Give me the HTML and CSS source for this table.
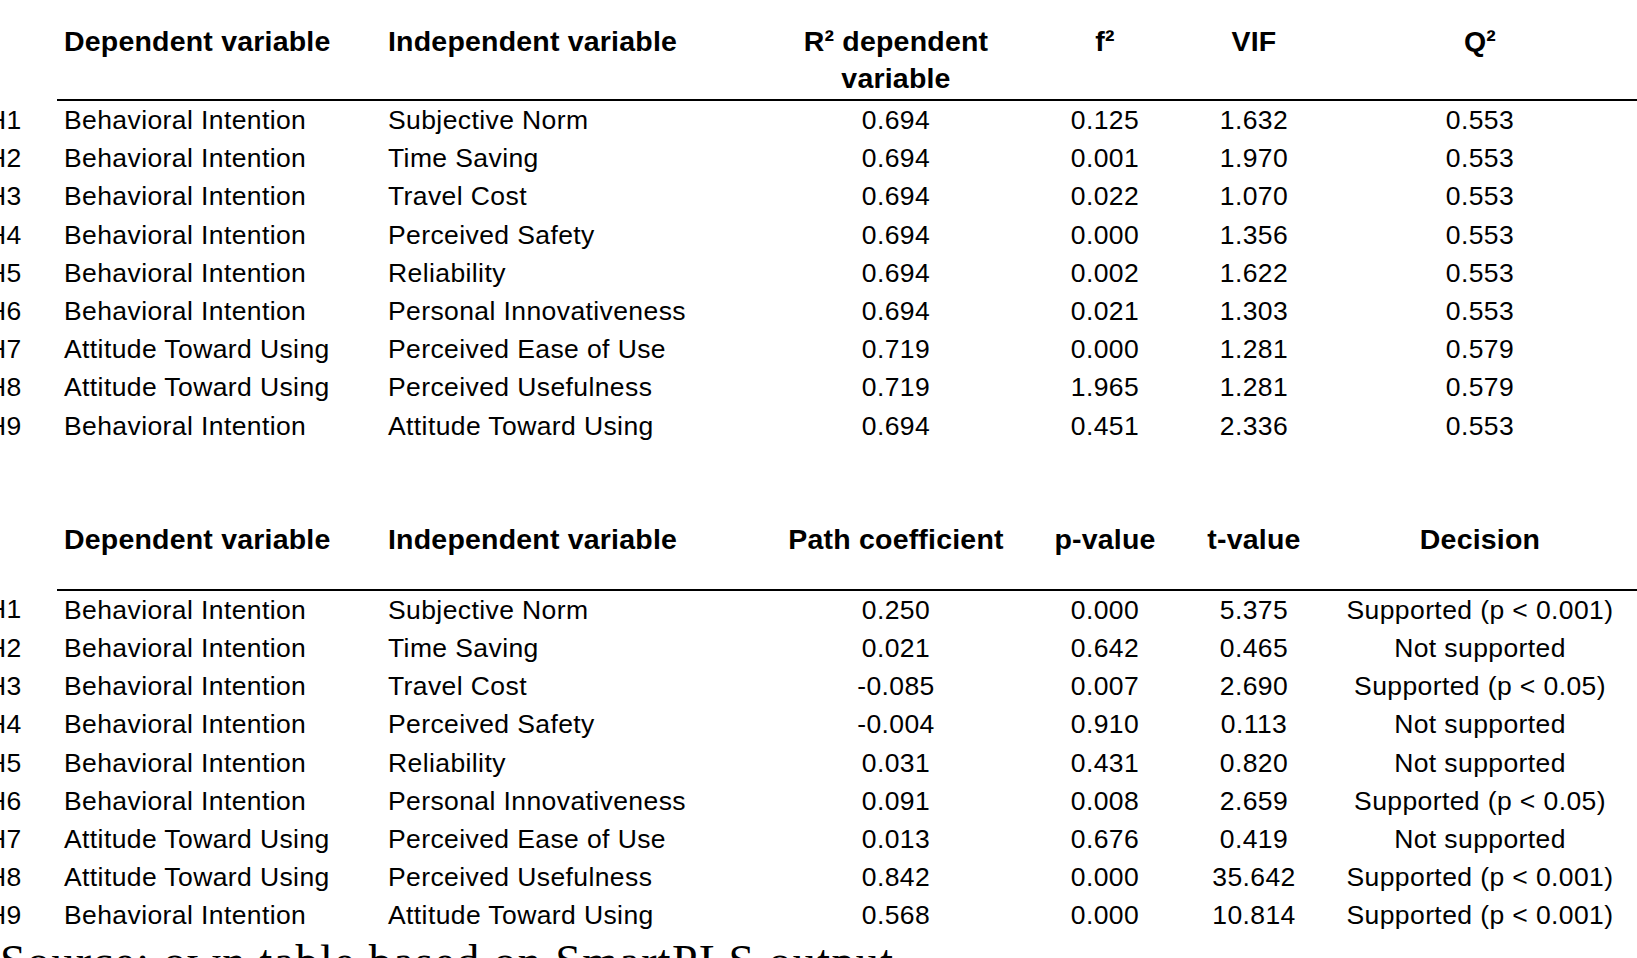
FILE: index.html
```html
<!DOCTYPE html>
<html lang="en">
<head>
  <meta charset="UTF-8" />
  <meta name="viewport" content="width=device-width, initial-scale=1.0"/>
  <title>Structural model results</title>
  <link rel="stylesheet" href="styles.css">
</head>
<body>
  <div class="page">
    <table class="results">
      <colgroup>
        <col class="c-hyp"><col class="c-dep"><col class="c-ind"><col class="c-a"><col class="c-b"><col class="c-c"><col class="c-d">
      </colgroup>
      <thead>
        <tr>
          <th class="hyp"></th>
          <th class="left">Dependent variable</th>
          <th class="left">Independent variable</th>
          <th>R² dependent variable</th>
          <th>f²</th>
          <th>VIF</th>
          <th>Q²</th>
        </tr>
      </thead>
      <tbody>
        <tr><td class="hyp">H1</td><td class="left">Behavioral Intention</td><td class="left">Subjective Norm</td><td>0.694</td><td>0.125</td><td>1.632</td><td>0.553</td></tr>
        <tr><td class="hyp">H2</td><td class="left">Behavioral Intention</td><td class="left">Time Saving</td><td>0.694</td><td>0.001</td><td>1.970</td><td>0.553</td></tr>
        <tr><td class="hyp">H3</td><td class="left">Behavioral Intention</td><td class="left">Travel Cost</td><td>0.694</td><td>0.022</td><td>1.070</td><td>0.553</td></tr>
        <tr><td class="hyp">H4</td><td class="left">Behavioral Intention</td><td class="left">Perceived Safety</td><td>0.694</td><td>0.000</td><td>1.356</td><td>0.553</td></tr>
        <tr><td class="hyp">H5</td><td class="left">Behavioral Intention</td><td class="left">Reliability</td><td>0.694</td><td>0.002</td><td>1.622</td><td>0.553</td></tr>
        <tr><td class="hyp">H6</td><td class="left">Behavioral Intention</td><td class="left">Personal Innovativeness</td><td>0.694</td><td>0.021</td><td>1.303</td><td>0.553</td></tr>
        <tr><td class="hyp">H7</td><td class="left">Attitude Toward Using</td><td class="left">Perceived Ease of Use</td><td>0.719</td><td>0.000</td><td>1.281</td><td>0.579</td></tr>
        <tr><td class="hyp">H8</td><td class="left">Attitude Toward Using</td><td class="left">Perceived Usefulness</td><td>0.719</td><td>1.965</td><td>1.281</td><td>0.579</td></tr>
        <tr><td class="hyp">H9</td><td class="left">Behavioral Intention</td><td class="left">Attitude Toward Using</td><td>0.694</td><td>0.451</td><td>2.336</td><td>0.553</td></tr>
      </tbody>
    </table>

    <table class="results second">
      <colgroup>
        <col class="c-hyp"><col class="c-dep"><col class="c-ind"><col class="c-a"><col class="c-b"><col class="c-c"><col class="c-d">
      </colgroup>
      <thead>
        <tr>
          <th class="hyp"></th>
          <th class="left">Dependent variable</th>
          <th class="left">Independent variable</th>
          <th>Path coefficient</th>
          <th>p-value</th>
          <th>t-value</th>
          <th>Decision</th>
        </tr>
      </thead>
      <tbody>
        <tr><td class="hyp">H1</td><td class="left">Behavioral Intention</td><td class="left">Subjective Norm</td><td>0.250</td><td>0.000</td><td>5.375</td><td>Supported (p &lt; 0.001)</td></tr>
        <tr><td class="hyp">H2</td><td class="left">Behavioral Intention</td><td class="left">Time Saving</td><td>0.021</td><td>0.642</td><td>0.465</td><td>Not supported</td></tr>
        <tr><td class="hyp">H3</td><td class="left">Behavioral Intention</td><td class="left">Travel Cost</td><td>-0.085</td><td>0.007</td><td>2.690</td><td>Supported (p &lt; 0.05)</td></tr>
        <tr><td class="hyp">H4</td><td class="left">Behavioral Intention</td><td class="left">Perceived Safety</td><td>-0.004</td><td>0.910</td><td>0.113</td><td>Not supported</td></tr>
        <tr><td class="hyp">H5</td><td class="left">Behavioral Intention</td><td class="left">Reliability</td><td>0.031</td><td>0.431</td><td>0.820</td><td>Not supported</td></tr>
        <tr><td class="hyp">H6</td><td class="left">Behavioral Intention</td><td class="left">Personal Innovativeness</td><td>0.091</td><td>0.008</td><td>2.659</td><td>Supported (p &lt; 0.05)</td></tr>
        <tr><td class="hyp">H7</td><td class="left">Attitude Toward Using</td><td class="left">Perceived Ease of Use</td><td>0.013</td><td>0.676</td><td>0.419</td><td>Not supported</td></tr>
        <tr><td class="hyp">H8</td><td class="left">Attitude Toward Using</td><td class="left">Perceived Usefulness</td><td>0.842</td><td>0.000</td><td>35.642</td><td>Supported (p &lt; 0.001)</td></tr>
        <tr><td class="hyp">H9</td><td class="left">Behavioral Intention</td><td class="left">Attitude Toward Using</td><td>0.568</td><td>0.000</td><td>10.814</td><td>Supported (p &lt; 0.001)</td></tr>
      </tbody>
    </table>

    <p class="source">Source: own table based on SmartPLS output</p>
  </div>
</body>
</html>
```

FILE: styles.css
```css
body {
  margin: 0;
  background: #ffffff;
  color: #000000;
  font-family: 'Liberation Sans', Arial, sans-serif;
  overflow: hidden;
}

.page {
  width: 1637px;
  height: 958px;
  overflow: hidden;
}

.results {
  border-collapse: collapse;
  table-layout: fixed;
  width: 1662px;
  margin-left: -22px;
}

/* column widths */
.c-hyp { width: 79px; }
.c-dep { width: 324px; }
.c-ind { width: 389px; }
.c-a { width: 252px; }
.c-b { width: 166px; }
.c-c { width: 132px; }
.c-d { width: 320px; }

.results th {
  font-size: 28.5px;
  font-weight: bold;
  letter-spacing: 0.2px;
  line-height: 37px;
  vertical-align: top;
  text-align: center;
  padding: 23px 0 2px;
  border-bottom: 2px solid #000;
}

.results td {
  font-size: 26.5px;
  letter-spacing: 0.4px;
  line-height: 38.2px;
  height: 38.2px;
  padding: 0;
  text-align: center;
  white-space: nowrap;
}

.results th.hyp {
  border-bottom: none;
}

.results td.hyp {
  text-align: left;
  padding-left: 9px;
}

.results .left {
  text-align: left;
  padding-left: 7px;
}

.second {
  margin-top: 53px;
}

.second th {
  padding-bottom: 31px;
}

.source {
  margin: 4px 0 0;
  font-family: 'Liberation Serif', 'Times New Roman', serif;
  font-size: 46px;
  line-height: 46px;
  letter-spacing: 1.4px;
  white-space: nowrap;
}
```
